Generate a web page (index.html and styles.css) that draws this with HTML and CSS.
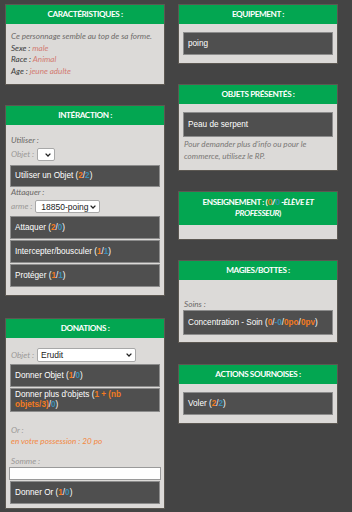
FILE: index.html
```html
<!DOCTYPE html>
<html lang="fr">
<head>
<meta charset="utf-8">
<link rel="stylesheet" href="styles.css">
</head>
<body>
<div class="page">
  <div class="col">
    <section class="panel">
      <h2 class="ph">CARACTÉRISTIQUES :</h2>
      <div class="pb pb-carac">
        <p class="note">Ce personnage semble au top de sa forme.</p>
        <p class="kv"><span class="k">Sexe :</span> <span class="v">male</span></p>
        <p class="kv"><span class="k">Race :</span> <span class="v">Animal</span></p>
        <p class="kv"><span class="k">Age :</span> <span class="v">jeune adulte</span></p>
      </div>
    </section>

    <section class="panel">
      <h2 class="ph">INTÉRACTION :</h2>
      <div class="pb pb-inter">
        <div class="lbl lbl-mid">Utiliser :</div>
        <div class="row row-objet">
          <span class="lbl lbl-light">Objet :</span>
          <div class="sel sel-empty"><span></span><svg class="chev" viewBox="0 0 6 4"><path d="M0.6 0.6 L3 3 L5.4 0.6" /></svg></div>
        </div>
        <div class="btn btn-use">Utiliser un Objet (<b class="o">2</b>/<b class="b">2</b>)</div>
        <div class="lbl lbl-mid">Attaquer :</div>
        <div class="row row-arme">
          <span class="lbl lbl-light">arme :</span>
          <div class="sel sel-arme"><span>18850-poing</span><svg class="chev" viewBox="0 0 6 4"><path d="M0.6 0.6 L3 3 L5.4 0.6" /></svg></div>
        </div>
        <div class="stack">
          <div class="btn">Attaquer (<b class="o">2</b>/<b class="b">0</b>)</div>
          <div class="btn">Intercepter/bousculer (<b class="o">1</b>/<b class="b">1</b>)</div>
          <div class="btn">Protéger (<b class="o">1</b>/<b class="b">1</b>)</div>
        </div>
      </div>
    </section>

    <section class="panel panel-don">
      <h2 class="ph">DONATIONS :</h2>
      <div class="pb pb-don">
        <div class="row row-don">
          <span class="lbl lbl-light">Objet :</span>
          <div class="sel sel-don"><span>Erudit</span><svg class="chev" viewBox="0 0 6 4"><path d="M0.6 0.6 L3 3 L5.4 0.6" /></svg></div>
        </div>
        <div class="stack stack-don">
          <div class="btn">Donner Objet (<b class="o">1</b>/<b class="b">0</b>)</div>
          <div class="btn btn-two"><span class="line">Donner plus d'objets (<b class="o">1 + (nb</b></span><span class="line"><b class="o">objets/3)</b>/<b class="b">0</b>)</span></div>
        </div>
        <div class="lbl lbl-light lbl-or">Or :</div>
        <div class="lbl lbl-orange">en votre possession : 20 po</div>
        <div class="lbl lbl-light lbl-somme">Somme :</div>
        <div class="input"></div>
        <div class="btn btn-or">Donner Or (<b class="o">1</b>/<b class="b">0</b>)</div>
      </div>
    </section>
  </div>

  <div class="col">
    <section class="panel">
      <h2 class="ph">EQUIPEMENT :</h2>
      <div class="pb pb-equip">
        <div class="btn">poing</div>
      </div>
    </section>

    <section class="panel">
      <h2 class="ph">OBJETS PRÉSENTÉS :</h2>
      <div class="pb pb-obj">
        <div class="btn btn-tall">Peau de serpent</div>
        <p class="note note-obj">Pour demander plus d'info ou pour le commerce, utilisez le RP.</p>
      </div>
    </section>

    <section class="panel">
      <h2 class="ph ph-two"><span class="line">ENSEIGNEMENT : (<span class="o">0</span>/<span class="b">0</span> <i>-ÉLÈVE ET</i></span><span class="line"><i>PROFESSEUR</i>)</span></h2>
      <div class="pb pb-ens"></div>
    </section>

    <section class="panel">
      <h2 class="ph">MAGIES/BOTTES :</h2>
      <div class="pb pb-mag">
        <div class="lbl lbl-mid">Soins :</div>
        <div class="btn btn-tall">Concentration - Soin (<b class="o">0</b>/<b class="b">-0</b>/<b class="o">0po</b>/<b class="o">0pv</b>)</div>
      </div>
    </section>

    <section class="panel panel-act">
      <h2 class="ph">ACTIONS SOURNOISES :</h2>
      <div class="pb pb-act">
        <div class="btn">Voler (<b class="o">2</b>/<b class="b">2</b>)</div>
      </div>
    </section>
  </div>
</div>
</body>
</html>
```

FILE: styles.css
```css
* { box-sizing: border-box; }

body {
  margin: 0;
  background: #444444;
  font-family: "Liberation Sans", Arial, sans-serif;
}

.page {
  display: grid;
  grid-template-columns: 160px 160px;
  column-gap: 13px;
  padding: 4px 0 0 5px;
  align-items: start;
}

.col {
  display: flex;
  flex-direction: column;
  gap: 20px;
}

.panel {
  background: #dcdad8;
  border: 1px solid #5c5852;
}

.panel-don { margin-top: 2px; }
.panel-act { margin-top: 1px; }

.ph {
  margin: 0;
  background: #03a651;
  color: #ffffff;
  font-family: Lato, "Liberation Sans", sans-serif;
  font-weight: bold;
  font-size: 8.2px;
  letter-spacing: -0.4px;
  line-height: 10px;
  padding: 4px 6px 5px;
  text-align: center;
}

.ph-two {
  line-height: 11px;
  padding: 5px 14px 6px;
}

.ph i { font-style: italic; }

.pb {
  padding: 8px 4px 8px;
}

.note, .kv {
  margin: 0;
  font-family: Lato, "Liberation Sans", sans-serif;
  font-style: italic;
  font-size: 8.1px;
  line-height: 11.5px;
  color: #6e6c6a;
  padding-left: 1px;
}

.kv .k { color: #3a3a3a; }
.kv .v { color: #d27a72; }

.pb-carac { padding: 7px 4px 7px; }

.lbl {
  font-family: Lato, "Liberation Sans", sans-serif;
  font-style: italic;
  font-size: 8.2px;
  line-height: 11px;
  padding-left: 1px;
}

.lbl-mid { color: #6a6866; }
.lbl-light { color: #9a9896; }
.lbl-orange { color: #f3873f; }

.row {
  display: flex;
  align-items: center;
  gap: 3px;
}

.sel {
  display: flex;
  align-items: center;
  justify-content: space-between;
  background: #ffffff;
  border: 1px solid #a8a8a8;
  border-radius: 2px;
  font-family: "Liberation Sans", Arial, sans-serif;
  font-size: 8.5px;
  color: #222222;
  padding: 0 3px 0 5px;
}

.chev {
  width: 6px;
  height: 4px;
  fill: none;
  stroke: #222222;
  stroke-width: 1.3;
}

.sel-empty { width: 18px; height: 13px; justify-content: flex-end; }
.sel-arme { width: 65px; height: 13px; }
.sel-don { width: 99px; height: 14px; padding-left: 3px; }

.row-objet { margin-top: 2px; }
.row-arme { margin-top: 2px; }

.pb-inter { padding: 10px 4px 8px; }

.btn {
  background: #4f4f4f;
  border: 1px solid #8c8c8c;
  color: #ffffff;
  font-family: "Liberation Sans", Arial, sans-serif;
  font-size: 8.2px;
  height: 23px;
  line-height: 21px;
  padding: 0 4px;
  white-space: nowrap;
}

.btn b { font-weight: bold; }
.o { color: #f47b20; }
.b { color: #3d8fb8; }

.btn-use { margin-top: 4px; height: 22px; line-height: 20px; }

.stack {
  display: flex;
  flex-direction: column;
  gap: 1px;
  margin-top: 3px;
}

.pb-don { padding: 10px 4px 4px; }
.stack-don { margin-top: 2px; }

.btn-two {
  display: flex;
  flex-direction: column;
  justify-content: center;
  height: 24px;
  line-height: 10px;
  padding: 0 4px;
}

.line { display: block; }

.lbl-or { margin-top: 13px; }
.lbl-somme { margin-top: 9px; }

.input {
  height: 13px;
  margin: 0 -1px 1px;
  background: #ffffff;
  border: 1px solid #9a9a9a;
}

.pb-equip { padding: 8px 4px 8px; }

.btn-tall { height: 25px; line-height: 23px; }

.pb-obj { padding: 8px 4px 8px; }
.note-obj { color: #7a7876; line-height: 12px; margin-top: 1px; }

.pb-ens { height: 14px; padding: 0; }

.pb-mag { padding: 19px 4px 7px; }

.pb-act { padding: 8px 4px 8px; }
```
